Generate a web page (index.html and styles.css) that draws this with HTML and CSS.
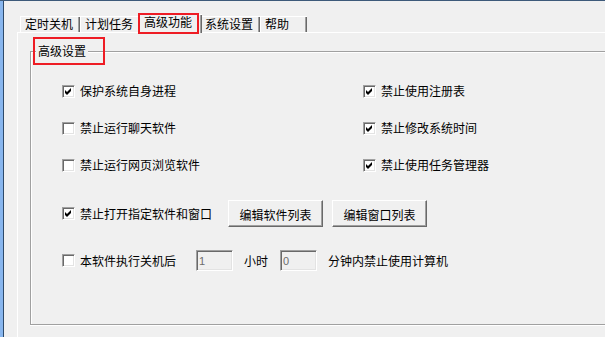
FILE: index.html
```html
<!DOCTYPE html>
<html>
<head>
  <title>高级功能</title>
  <link rel="stylesheet" href="styles.css">
</head>
<body>
  <div class="window">
    <div class="edge"></div>
    <div class="client">
      <div class="tabs">
        <div class="tab">定时关机</div>
        <div class="tab">计划任务</div>
        <div class="tab active">高级功能<span class="mark mark-tab"></span></div>
        <div class="tab">系统设置</div>
        <div class="tab last">帮助</div>
      </div>
      <div class="panel">
        <div class="group">
          <div class="group-title">高级设置<span class="mark mark-title"></span></div>
          <div class="options">
            <label class="check"><span class="box on"><svg viewBox="0 0 11 11"><polygon points="2,4 4,6 8,2 8,5 4,9 2,7"/></svg></span>保护系统自身进程</label>
            <label class="check"><span class="box on"><svg viewBox="0 0 11 11"><polygon points="2,4 4,6 8,2 8,5 4,9 2,7"/></svg></span>禁止使用注册表</label>
            <label class="check"><span class="box"></span>禁止运行聊天软件</label>
            <label class="check"><span class="box on"><svg viewBox="0 0 11 11"><polygon points="2,4 4,6 8,2 8,5 4,9 2,7"/></svg></span>禁止修改系统时间</label>
            <label class="check"><span class="box"></span>禁止运行网页浏览软件</label>
            <label class="check"><span class="box on"><svg viewBox="0 0 11 11"><polygon points="2,4 4,6 8,2 8,5 4,9 2,7"/></svg></span>禁止使用任务管理器</label>
          </div>
          <div class="row row-apps">
            <label class="check"><span class="box on"><svg viewBox="0 0 11 11"><polygon points="2,4 4,6 8,2 8,5 4,9 2,7"/></svg></span>禁止打开指定软件和窗口</label>
            <button class="btn btn-first">编辑软件列表</button>
            <button class="btn btn-second">编辑窗口列表</button>
          </div>
          <div class="row row-lock">
            <label class="check"><span class="box"></span>本软件执行关机后</label>
            <input type="text" class="field field-hours" value="1" disabled>
            <span class="unit">小时</span>
            <input type="text" class="field field-minutes" value="0" disabled>
            <span class="unit">分钟内禁止使用计算机</span>
          </div>
        </div>
      </div>
    </div>
  </div>
</body>
</html>
```

FILE: styles.css
```css
body {
  margin: 0;
  overflow: hidden;
  background-color: #f0f0f0;
  font-family: "Noto Sans CJK SC", "Noto Sans", sans-serif;
  font-size: 12px;
  color: #000;
}

.window {
  display: flex;
  height: 336px;
  border-top: 1px solid #3d5a7a;
}

.edge {
  width: 3px;
  flex: none;
  background-color: #88b6ee;
  border-right: 1px solid #2d4a6a;
}

.client {
  flex: 1;
}

/* tab strip */
.tabs {
  display: flex;
  align-items: flex-start;
  height: 19px;
  margin: 13px 0 0 16px;
}

.tab {
  width: 60px;
  height: 16px;
  margin-top: 2px;
  padding-left: 5px;
  box-sizing: border-box;
  line-height: 16px;
  white-space: nowrap;
  box-shadow: inset 1px 1px 0 #fff, inset -1px 0 0 #696969, inset -2px 0 0 #a0a0a0;
}

.tab.last {
  width: 47px;
}

.tab.active {
  position: relative;
  z-index: 1;
  width: 64px;
  height: 19px;
  margin: 0 -2px;
  padding-left: 6px;
  padding-bottom: 3px;
  background-color: #f0f0f0;
}

.panel {
  margin: -1px 0 0 13px;
  height: 320px;
  border-top: 1px solid #fff;
  border-left: 1px solid #fff;
  overflow: hidden;
}

/* red annotation boxes */
.mark {
  position: absolute;
  box-sizing: border-box;
  border: 2px solid #ee1c24;
}

.mark-tab {
  left: 0;
  top: -1px;
  width: 61px;
  height: 21px;
}

.mark-title {
  left: -3px;
  top: -7px;
  width: 72px;
  height: 28px;
}

/* group box, its right side runs past the window */
.group {
  height: 274px;
  margin: 18px 0 0 12px;
  box-sizing: border-box;
  border: 1px solid #a0a0a0;
  border-right: none;
  box-shadow: inset 1px 1px 0 #fff, 0 1px 0 #fff;
}

.group-title {
  position: relative;
  width: fit-content;
  margin: -8px 0 0 5px;
  padding: 0 2px;
  line-height: 14px;
  background-color: #f0f0f0;
}

.options {
  display: grid;
  grid-template-columns: 301px auto;
  grid-auto-rows: 20px;
  row-gap: 17px;
  margin-top: 23px;
  padding-left: 31px;
}

.check {
  display: flex;
  align-items: center;
  gap: 5px;
  line-height: 14px;
  white-space: nowrap;
}

.box {
  display: block;
  width: 13px;
  height: 13px;
  flex: none;
  box-sizing: border-box;
  border: 1px solid;
  border-color: #a0a0a0 #fff #fff #a0a0a0;
  box-shadow: inset 1px 1px 0 #696969, inset -1px -1px 0 #e3e3e3;
  background-color: #fff;
}

.box svg {
  display: block;
  width: 11px;
  height: 11px;
  fill: #000;
}

.row {
  display: flex;
  align-items: center;
  padding-left: 31px;
}

.row-apps {
  height: 27px;
  margin-top: 25px;
}

.row-lock {
  height: 21px;
  margin-top: 23px;
}

.btn {
  width: 95px;
  height: 27px;
  padding: 2px 0 0 0;
  font: inherit;
  color: #000;
  background-color: #f0f0f0;
  border: 1px solid;
  border-color: #fff #696969 #696969 #fff;
  box-shadow: inset -1px -1px 0 #a0a0a0;
  border-radius: 0;
}

.btn-first {
  margin-left: 16px;
}

.btn-second {
  margin-left: 9px;
}

.field {
  width: 37px;
  height: 21px;
  box-sizing: border-box;
  padding: 0 0 0 2px;
  border: 1px solid;
  border-color: #a0a0a0 #fff #fff #a0a0a0;
  box-shadow: inset 1px 1px 0 #696969, inset -1px -1px 0 #e3e3e3;
  background-color: #f0f0f0;
  color: #6d6d6d;
  font-family: "Liberation Sans", Arial, sans-serif;
  font-size: 11px;
}

.field-hours {
  margin-left: 20px;
}

.field-minutes {
  margin-left: 12px;
}

.unit {
  margin-left: 11px;
  line-height: 14px;
  white-space: nowrap;
}
```
